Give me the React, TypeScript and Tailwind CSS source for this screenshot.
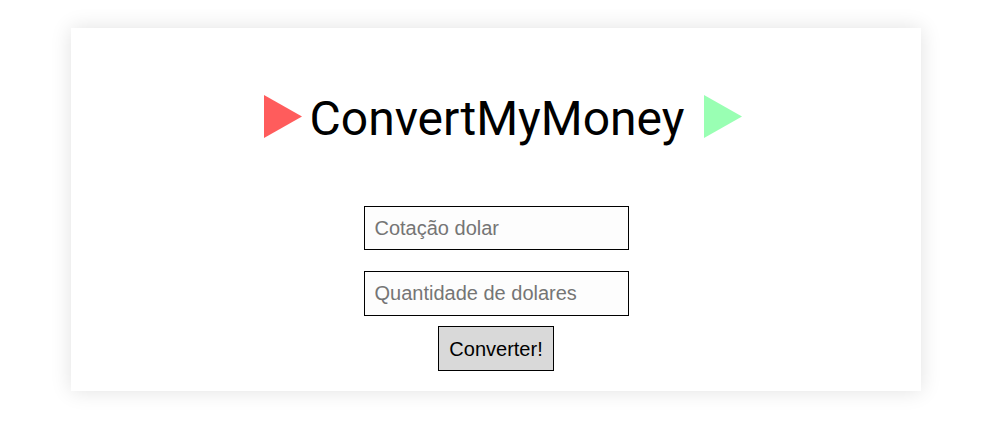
export default function App() {
  return (
    <div className="min-h-[431px] w-full bg-white pt-[28px] pl-[3px] flex justify-center items-start">
      <div className="w-[850px] h-[363px] bg-white shadow-[0_0_20px_rgba(0,0,0,0.12)] flex flex-col items-center">
        <div className="mt-[63px] ml-[14px] flex items-center font-['Roboto',sans-serif] text-black">
          <Triangle color="#ff5c5c" />
          <h1 className="ml-[8px] mr-[20px] text-[48px] leading-[56px] font-normal">
            ConvertMyMoney
          </h1>
          <Triangle color="#99ffb3" />
        </div>
        <form className="mt-[59px] flex flex-col items-center font-['Liberation_Sans',Arial,sans-serif]">
          <input
            type="text"
            placeholder="Cotação dolar"
            className="w-[265px] h-[44px] border border-black bg-[#fdfdfd] px-[10px] text-[20px] text-black placeholder:text-[#757575] outline-none"
          />
          <input
            type="text"
            placeholder="Quantidade de dolares"
            className="mt-[21px] w-[265px] h-[45px] border border-black bg-[#fdfdfd] px-[10px] text-[20px] text-black placeholder:text-[#757575] outline-none"
          />
          <button
            type="button"
            className="mt-[10px] w-[116px] h-[45px] border border-black bg-[#d9d9d9] text-[20px] text-black"
          >
            Converter!
          </button>
        </form>
      </div>
    </div>
  );
}

function Triangle({ color }: { color: string }) {
  return (
    <svg width="38" height="43" viewBox="0 0 38 43" className="block mb-[6px]">
      <polygon points="0,0 38,21.5 0,43" fill={color} />
    </svg>
  );
}
